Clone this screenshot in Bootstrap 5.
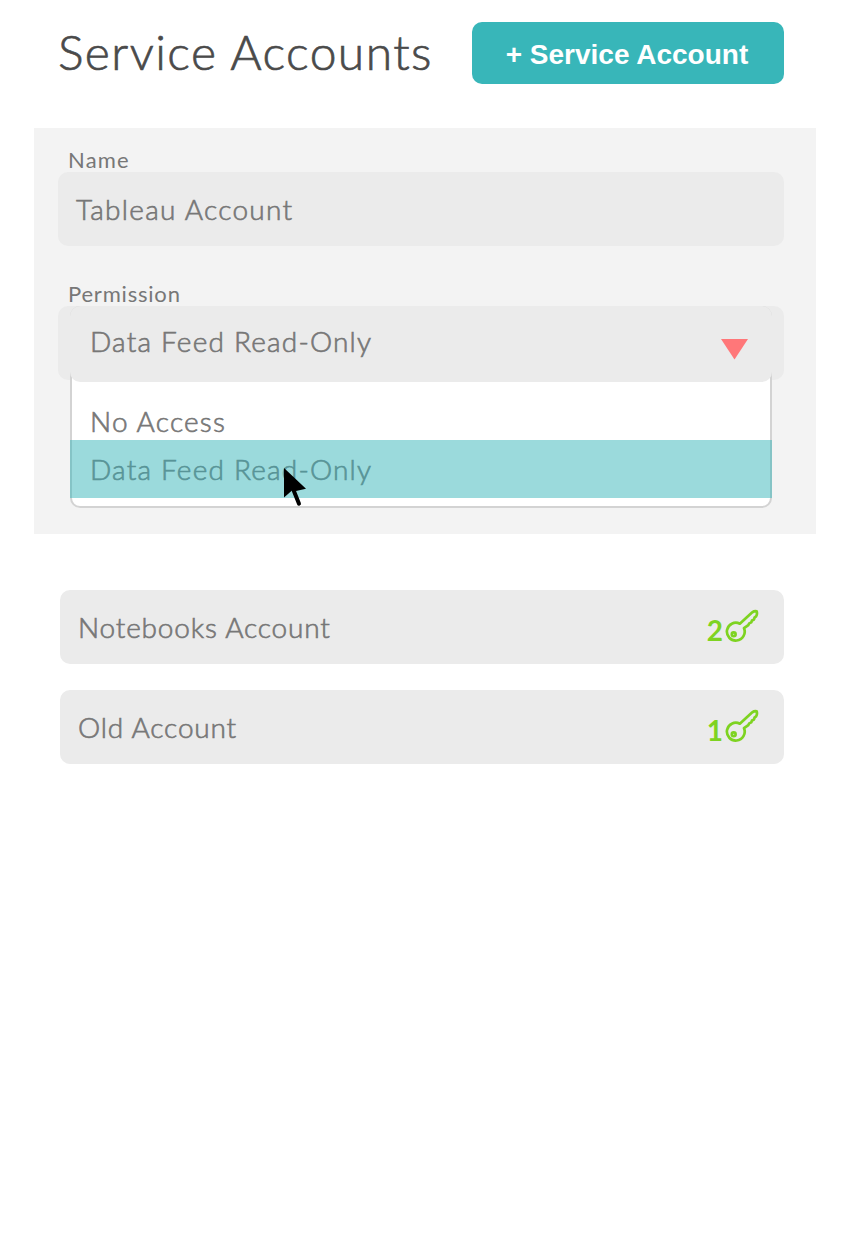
<!DOCTYPE html>
<html lang="en">
<head>
<meta charset="utf-8">
<meta name="viewport" content="width=device-width, initial-scale=1">
<title>Service Accounts</title>
<link href="https://cdn.jsdelivr.net/npm/bootstrap@5.3.0/dist/css/bootstrap.min.css" rel="stylesheet">
<style>
body{font-family:Lato,"Open Sans",sans-serif;font-weight:300;color:#777;background:#fff;font-size:28px;line-height:34px}
.page{width:846px;min-height:1258px}
.topbar{height:128px;padding:22px 62px 0 58px}
.page-title{font-size:48px;line-height:60px;font-weight:300;color:#4a4a4a;white-space:nowrap;letter-spacing:1.42px;-webkit-text-stroke:.7px #4a4a4a}
.btn-add{width:312px;height:62px;border:0;border-radius:10px;background:#38b6b9;color:#fff;font:700 28px/59px "Liberation Sans",Arial,sans-serif;padding:3px 2px 0 0;white-space:nowrap}
.edit-panel{width:782px;height:406px;margin-left:34px;background:#f3f3f3;padding:20px 32px 0 24px}
.field-label{font-size:22px;line-height:24px;font-weight:400;padding-left:10px;display:block;letter-spacing:.8px}
.field-label.short{letter-spacing:1.2px}
.item-text{letter-spacing:1.2px;-webkit-text-stroke:.65px currentColor;white-space:nowrap}
.item-text.tight{letter-spacing:.84px}
.item-text.wide{letter-spacing:1.3px}
.field-box{height:74px;border-radius:10px;background:#ebebeb;padding:0 18px;margin-bottom:36px}
.select-wrap{height:74px;border-radius:10px;background:#ebebeb;padding:0 12px}
.select-menu{height:202px;border:2px solid #d3d3d3;border-radius:10px;background:#fff}
.select-value{height:76px;margin:-2px -2px 0;border-radius:10px;background:#ebebeb;padding:0 24px 6px 20px}
.select-caret{margin-top:16px}
.option-row{padding-left:20px;margin:0 -2px}
.option-first{height:58px;padding-top:22px}
.option-active{height:58px;padding-top:12px;background:rgba(56,182,185,.5);color:#589497;position:relative}
.cursor-mark{position:absolute;left:213px;top:26px}
.account-list{padding:56px 62px 0 60px;gap:26px}
.account-row{height:74px;border-radius:10px;background:#ebebeb;padding:0 25px 0 18px}
.key-count{font-weight:700;color:#7ed321;margin:5px 2px 0 0}
.key-icon{fill:none;stroke:#7ed321;stroke-width:2.7;stroke-linejoin:round;margin-bottom:2px}
</style>
</head>
<body>
<svg class="d-none">
<symbol id="key" viewBox="0 0 34 34">
<path d="M14.800 14.700L27.300 3.300Q29.200 1.900 31.700 2.300Q32.500 5 31.100 7.400L29.500 8.600L29 10.500L27 11.500L26.300 13.400L24.200 14.400L23.300 16.100L19 19.200A8.900 8.900 0 1 1 14.800 14.700Z"/>
<circle cx="8.700" cy="25.200" r="1.900"/>
</symbol>
</svg>
<main class="page">
<header class="topbar d-flex justify-content-between align-items-start">
<h1 class="page-title m-0">Service Accounts</h1>
<button type="button" class="btn-add">+ Service Account</button>
</header>
<section class="edit-panel">
<span class="field-label short">Name</span>
<div class="field-box d-flex align-items-center"><span class="item-text wide">Tableau Account</span></div>
<span class="field-label">Permission</span>
<div class="select-wrap">
<div class="select-menu">
<div class="select-value d-flex align-items-center justify-content-between">
<span class="item-text">Data Feed Read-Only</span>
<svg class="select-caret" width="27" height="21" viewBox="0 0 27 21"><path d="M0 0H27L13.500 20.500Z" fill="#ff7779"/></svg>
</div>
<div class="option-row option-first"><span class="item-text">No Access</span></div>
<div class="option-row option-active"><span class="item-text">Data Feed Read-Only</span>
<svg class="cursor-mark" width="25" height="42" viewBox="0 0 25 42"><path d="M1 2V31.500L9 24.500L13 25L23 22.800Z"/><path d="M10.500 24L16 37.700" stroke="#000" stroke-width="4" stroke-linecap="round"/></svg>
</div>
</div>
</div>
</section>
<section class="account-list d-flex flex-column">
<div class="account-row d-flex align-items-center justify-content-between">
<span class="item-text tight">Notebooks Account</span>
<span class="d-flex align-items-center"><span class="key-count">2</span><svg class="key-icon" width="34" height="34"><use href="#key"/></svg></span>
</div>
<div class="account-row d-flex align-items-center justify-content-between">
<span class="item-text tight">Old Account</span>
<span class="d-flex align-items-center"><span class="key-count">1</span><svg class="key-icon" width="34" height="34"><use href="#key"/></svg></span>
</div>
</section>
</main>
<script src="https://cdn.jsdelivr.net/npm/bootstrap@5.3.0/dist/js/bootstrap.bundle.min.js"></script>
</body>
</html>
